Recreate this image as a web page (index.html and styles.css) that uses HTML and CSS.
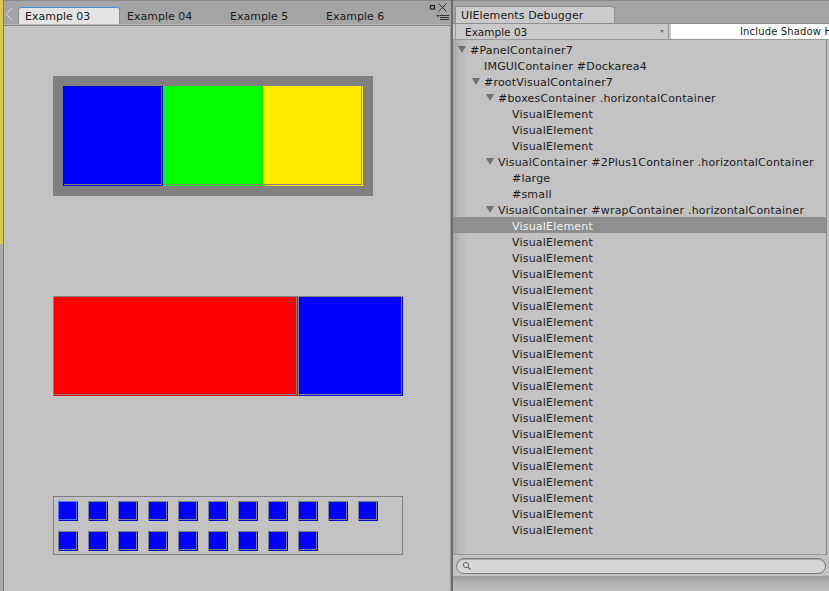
FILE: index.html
```html
<!DOCTYPE html>
<html>
<head>
<meta charset="utf-8">
<link rel="stylesheet" href="styles.css">
</head>
<body>
<div class="strip"><div class="strip-top"></div><div class="strip-bottom"></div></div>

<div class="left-panel">
  <div class="tabbar">
    <svg class="back" width="8" height="14" viewBox="0 0 8 14"><polyline points="7,1 1,7 7,13" fill="none" stroke="#cfcfcf" stroke-width="1"/></svg>
    <div class="tab active">Example 03</div>
    <div class="tab t2">Example 04</div>
    <div class="tab t3">Example 5</div>
    <div class="tab t4">Example 6</div>
    <div class="win-icons">
      <svg width="22" height="21" viewBox="0 0 22 21">
        <rect x="2.5" y="4.5" width="4" height="3.5" fill="none" stroke="#222" stroke-width="1.2"/>
        <path d="M10.5 2.5 L18.5 10.5 M18.5 2.5 L10.5 10.5" stroke="#333" stroke-width="1" fill="none"/>
        <path d="M8 14 L12 14 L10 16 Z" fill="#333"/>
        <path d="M12 14.5 H21 M12 16.5 H21 M12 18.5 H21" stroke="#333" stroke-width="1"/>
      </svg>
    </div>
  </div>
  <div class="content">
    <div class="boxes">
      <div class="box blue"></div>
      <div class="box green"></div>
      <div class="box yellow"></div>
    </div>
    <div class="twoplus">
      <div class="large"></div>
      <div class="small"></div>
    </div>
    <div class="wrap">
      <div class="sq first"></div><div class="sq"></div><div class="sq"></div><div class="sq"></div><div class="sq"></div><div class="sq"></div><div class="sq"></div><div class="sq"></div><div class="sq"></div><div class="sq"></div><div class="sq"></div>
      <div class="sq"></div><div class="sq"></div><div class="sq"></div><div class="sq"></div><div class="sq"></div><div class="sq"></div><div class="sq"></div><div class="sq"></div><div class="sq"></div>
    </div>
  </div>
</div>

<div class="right-panel">
  <div class="rtabbar">
    <div class="rtab">UIElements Debugger</div>
  </div>
  <div class="toolbar">
    <div class="dropdown">Example 03<span class="dd-arrow"></span></div>
    <div class="toggle">Include Shadow Hierarchy</div>
  </div>
  <div class="tree">
    <div class="row l0"><span class="arrow"></span>#PanelContainer7</div>
    <div class="row l1">IMGUIContainer #Dockarea4</div>
    <div class="row l1 exp"><span class="arrow"></span>#rootVisualContainer7</div>
    <div class="row l2 exp"><span class="arrow"></span>#boxesContainer .horizontalContainer</div>
    <div class="row l3">VisualElement</div>
    <div class="row l3">VisualElement</div>
    <div class="row l3">VisualElement</div>
    <div class="row l2 exp"><span class="arrow"></span>VisualContainer #2Plus1Container .horizontalContainer</div>
    <div class="row l3">#large</div>
    <div class="row l3">#small</div>
    <div class="row l2 exp"><span class="arrow"></span>VisualContainer #wrapContainer .horizontalContainer</div>
    <div class="row l3 selected">VisualElement</div>
    <div class="row l3">VisualElement</div>
    <div class="row l3">VisualElement</div>
    <div class="row l3">VisualElement</div>
    <div class="row l3">VisualElement</div>
    <div class="row l3">VisualElement</div>
    <div class="row l3">VisualElement</div>
    <div class="row l3">VisualElement</div>
    <div class="row l3">VisualElement</div>
    <div class="row l3">VisualElement</div>
    <div class="row l3">VisualElement</div>
    <div class="row l3">VisualElement</div>
    <div class="row l3">VisualElement</div>
    <div class="row l3">VisualElement</div>
    <div class="row l3">VisualElement</div>
    <div class="row l3">VisualElement</div>
    <div class="row l3">VisualElement</div>
    <div class="row l3">VisualElement</div>
    <div class="row l3">VisualElement</div>
    <div class="row l3">VisualElement</div>
  </div>
  <div class="searchbar">
    <div class="search">
      <svg width="10" height="10" viewBox="0 0 10 10"><circle cx="4" cy="4" r="2.6" fill="none" stroke="#666" stroke-width="1"/><path d="M6 6 L8.5 8.5" stroke="#666" stroke-width="1.2"/></svg>
    </div>
  </div>
  <div class="footer"></div>
</div>
</body>
</html>
```

FILE: styles.css
```css
* { box-sizing: border-box; }
html, body { margin: 0; padding: 0; }
body {
  width: 829px;
  height: 591px;
  overflow: hidden;
  display: flex;
  background: #c2c2c2;
  font-family: "DejaVu Sans", sans-serif;
  font-size: 11px;
  color: #1c1c1c;
}

.strip { width: 3px; display: flex; flex-direction: column; }
.strip-top { height: 244px; background: #d9c94d; }
.strip-bottom { flex: 1; background: #a9a9a9; }

.left-panel {
  width: 450px;
  display: flex;
  flex-direction: column;
  border-left: 1px solid #7a7a7a;
  border-right: 2px solid #6c6c6c;
  box-shadow: inset -1px 0 0 #9c9c9c;
}
.tabbar {
  height: 26px;
  flex: none;
  background: #a4a4a4;
  border-top: 1px solid #8a8a8a;
  border-bottom: 1px solid #868686;
  box-shadow: inset 0 -1px 0 #b8b8b8;
  display: flex;
  align-items: flex-end;
  position: relative;
  padding-bottom: 1px;
}
.back { position: absolute; left: 1px; top: 6px; }
.tab {
  height: 17px;
  line-height: 19px;
  padding-left: 7px;
  white-space: nowrap;
}
.tab.active {
  margin-left: 14px;
  width: 102px;
  background: #e3e3e3;
  border-top: 1px solid #4c8fe0;
  border-left: 1px solid #8c8c8c;
  border-right: 1px solid #8c8c8c;
  border-radius: 3px 3px 0 0;
  padding-left: 6px;
  line-height: 18px;
}
.tab.t2 { width: 103px; }
.tab.t3 { width: 96px; }
.tab.t4 { width: 100px; }
.win-icons { position: absolute; right: 1px; top: 0; }

.content {
  flex: 1;
  display: flex;
  flex-direction: column;
  align-items: flex-start;
  padding-left: 49px;
}
.boxes {
  margin-top: 50px;
  background: #808080;
  padding: 10px;
  display: flex;
}
.box {
  width: 100px;
  height: 100px;
}
.box.blue { background: #0000ff; box-shadow: inset 1px 1px 0 #0000c8, inset -1px -1px 0 #0000ff, inset -2px -2px 0 #808080; }
.box.green { background: #00ff00; box-shadow: inset -1px -1px 0 #00ff00, inset -2px -2px 0 #808080; }
.box.yellow { background: #ffea00; box-shadow: inset -1px -1px 0 #ffea00, inset -2px -2px 0 #808080; }

.twoplus {
  margin-top: 100px;
  display: flex;
  width: 350px;
  height: 100px;
}
.large {
  width: 245px;
  background: #ff0000;
  box-shadow: inset 1px 1px 0 #808080, inset -1px -1px 0 #ff0000, inset -2px -2px 0 #808080;
}
.small {
  width: 105px;
  background: #0000ff;
  box-shadow: inset 1px 1px 0 #808080, inset -1px -1px 0 #0000ff, inset -2px -2px 0 #808080;
}

.wrap {
  margin-top: 100px;
  width: 350px;
  border: 1px solid #808080;
  padding: 4px 0 3px 4px;
  display: flex;
  flex-wrap: wrap;
  gap: 10px;
}
.sq {
  width: 20px;
  height: 20px;
  background: #0000ff;
  box-shadow: inset 1px 1px 0 #808080, inset -1px -1px 0 #0000d0, inset -2px -2px 0 #808080;
}
.sq.first { box-shadow: inset 1px 1px 0 #4d7bff, inset -1px -1px 0 #0000d0, inset -2px -2px 0 #4d7bff; }

.right-panel {
  flex: 1;
  display: flex;
  flex-direction: column;
  min-width: 0;
}
.rtabbar {
  height: 23px;
  flex: none;
  background: #a4a4a4;
  border-top: 1px solid #8a8a8a;
  display: flex;
  align-items: flex-end;
  padding-left: 2px;
}
.rtab {
  width: 160px;
  height: 17px;
  line-height: 17px;
  padding-left: 5px;
  background: #cbcbcb;
  border: 1px solid #8e8e8e;
  border-bottom: none;
  border-radius: 0 4px 0 0;
  font-size: 11px;
  letter-spacing: 0.1px;
}
.toolbar {
  height: 17px;
  flex: none;
  display: flex;
  background: #c9c9c9;
  border-top: 1px solid #8e8e8e;
  border-bottom: 1px solid #9a9a9a;
  padding-left: 2px;
}
.dropdown {
  width: 214px;
  padding-left: 9px;
  line-height: 16px;
  border-left: 1px solid #9a9a9a;
  border-right: 1px solid #9a9a9a;
  position: relative;
  font-size: 10.5px;
}
.dd-arrow {
  position: absolute;
  right: 4px;
  top: 6px;
  border-left: 2px solid transparent;
  border-right: 2px solid transparent;
  border-top: 3px solid #777;
}
.toggle {
  flex: 1;
  margin-left: 2px;
  background: #ffffff;
  padding-left: 69px;
  line-height: 16px;
  white-space: nowrap;
  overflow: hidden;
  font-size: 10px;
  letter-spacing: 0.15px;
}

.tree {
  flex: none;
  height: 515px;
  padding-top: 1px;
  background: linear-gradient(to right, #a2a2a2 0px, #b8b8b8 6px, #c2c2c2 16px);
  border-right: 1px solid #8a8a8a;
  margin-right: 2px;
  border-bottom: 1px solid #9a9a9a;
}
.row {
  height: 16px;
  line-height: 19px;
  white-space: nowrap;
  position: relative;
  padding-left: 17px;
  letter-spacing: 0.2px;
}
.row.l1 { padding-left: 31px; }
.row.l2 { padding-left: 45px; }
.row.l3 { padding-left: 59px; }
.row.selected { background: #8f8f8f; color: #f2f2f2; }
.arrow {
  position: absolute;
  top: 5px;
  margin-left: -12px;
  border-left: 4px solid transparent;
  border-right: 4px solid transparent;
  border-top: 7px solid #707070;
}

.searchbar {
  flex: none;
  height: 21px;
  padding: 3px 3px 0 3px;
  background: #c2c2c2;
}
.search {
  height: 16px;
  border: 1px solid #7c7c7c;
  border-radius: 8px;
  background: #d6d6d6;
  box-shadow: inset 0 1px 0 #a8a8a8;
  padding: 2px 0 0 5px;
}
.search svg { display: block; }
.footer {
  flex: 1;
  background: linear-gradient(to bottom, #9a9a9a, #b2b2b2 6px, #bcbcbc);
}
```
